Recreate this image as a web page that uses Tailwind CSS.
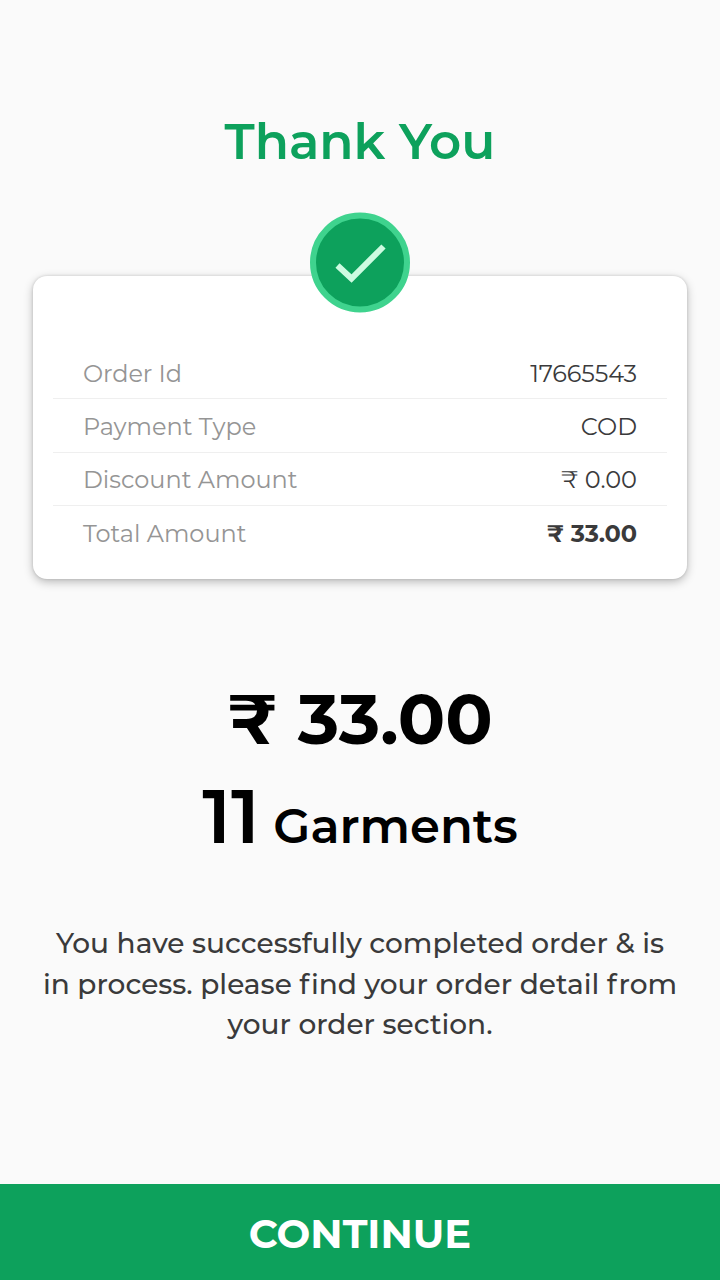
<!DOCTYPE html>
<html lang="en">
<head>
  <meta charset="UTF-8" />
  <meta name="viewport" content="width=device-width, initial-scale=1.0"/>
  <title>Thank You</title>
  <script src="https://cdn.jsdelivr.net/npm/@tailwindcss/browser@4"></script>
</head>
<body class="bg-[#fafafa] font-['Montserrat','Inter',sans-serif]">
  <div class="flex flex-col h-[1280px] w-[720px] overflow-hidden">
    <h1 class="mt-[112px] h-[60px] leading-[60px] text-center text-[50px] font-semibold whitespace-nowrap text-[#0da15c]">Thank You</h1>

    <!-- Order card -->
    <div class="relative mt-[104px] mx-[33px] h-[302.5px] px-5 pt-[70px] rounded-[14px] bg-white shadow-[0_3px_10px_rgba(0,0,0,0.26),0_0_3px_rgba(0,0,0,0.14)]">
      <svg class="absolute left-[277px] -top-[64px]" width="100" height="101" viewBox="0 0 100 101" fill="none">
        <circle cx="50" cy="50.5" r="47" fill="#0da15c" stroke="#3fd38e" stroke-width="6"/>
        <path d="M27.5 53.5 41.5 66.5 73.5 34.5" stroke="#cdfbe1" stroke-width="6"/>
      </svg>

      <dl class="text-[24px] text-[#3a3a3b]">
        <div class="flex justify-between h-[53.3px] px-[30px] leading-[55px] border-b border-[#efefef]">
          <dt class="text-[#959595] tracking-[-0.1px]">Order Id</dt>
          <dd class="tracking-[-0.1px]">17665543</dd>
        </div>
        <div class="flex justify-between h-[53.3px] px-[30px] leading-[55px] border-b border-[#efefef]">
          <dt class="text-[#959595]">Payment Type</dt>
          <dd>COD</dd>
        </div>
        <div class="flex justify-between h-[53.3px] px-[30px] leading-[54px] border-b border-[#efefef]">
          <dt class="text-[#959595]">Discount Amount</dt>
          <dd>₹ 0.00</dd>
        </div>
        <div class="flex justify-between h-[53.3px] px-[30px] leading-[55px]">
          <dt class="text-[#959595]">Total Amount</dt>
          <dd class="font-bold tracking-[-0.1px]">₹ 33.00</dd>
        </div>
      </dl>
    </div>

    <!-- Totals -->
    <div class="mt-[95.5px] text-center text-black">
      <p class="h-[90px] leading-[90px] text-[70px] font-bold">₹ 33.00</p>
      <p class="mt-[2px] h-[100px] leading-[100px] font-semibold"><span class="text-[76px]">11</span><span class="text-[48px]"> Garments</span></p>
    </div>

    <p class="mt-[57px] text-center text-[28px] font-medium leading-[40.5px] text-[#3a3a3b]">
      You have successfully completed order &amp; is<br>
      in process. please <span class="tracking-[1.8px]">f</span>ind your order detail <span class="tracking-[1.8px]">f</span>rom<br>
      your order section.
    </p>

    <button class="mt-auto h-24 pt-[3px] shrink-0 bg-[#0da15c] text-white text-[40px] font-bold">CONTINUE</button>
  </div>
</body>
</html>
